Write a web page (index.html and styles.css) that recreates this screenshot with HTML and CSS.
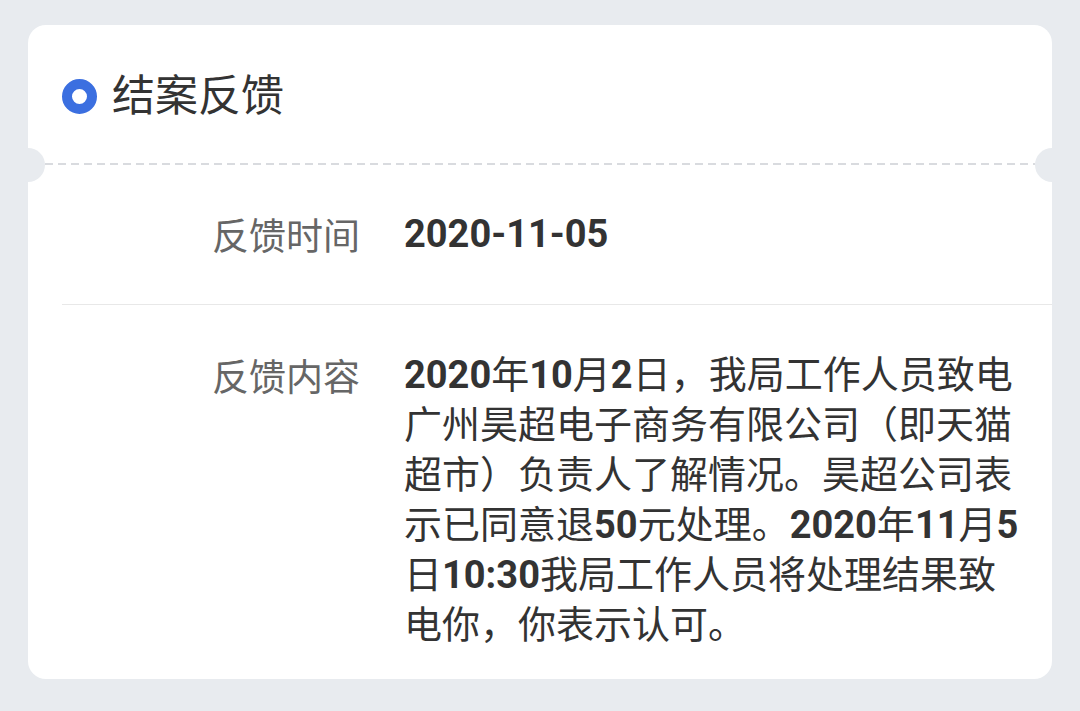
FILE: index.html
```html
<!DOCTYPE html>
<html lang="zh-CN">
<head>
<meta charset="utf-8">
<title>结案反馈</title>
<link rel="stylesheet" href="styles.css">
</head>
<body>
  <div class="card">
    <div class="card-head">
      <span class="ring"></span>
      <span class="title">结案反馈</span>
    </div>
    <div class="divider-dashed"></div>
    <span class="notch notch-left"></span>
    <span class="notch notch-right"></span>
    <div class="row row-first">
      <div class="label">反馈时间</div>
      <div class="value"><span class="num">2020-11-05</span></div>
    </div>
    <div class="row row-last">
      <div class="label">反馈内容</div>
      <div class="value text"><span class="num">2020</span>年<span class="num">10</span>月<span class="num">2</span>日，我局工作人员致电广州昊超电子商务有限公司（即天猫超市）负责人了解情况。昊超公司表示已同意退<span class="num">50</span>元处理。<span class="num">2020</span>年<span class="num">11</span>月<span class="num">5</span>日<span class="num">10:30</span>我局工作人员将处理结果致电你，你表示认可。</div>
    </div>
  </div>
</body>
</html>
```

FILE: styles.css
```css
html, body {
  margin: 0;
  padding: 0;
}
body {
  background: #e8ebef;
  font-family: Roboto, "Noto Sans CJK SC", sans-serif;
  width: 1080px;
  height: 711px;
  overflow: hidden;
  padding-top: 25px;
  box-sizing: border-box;
}
.card {
  position: relative;
  margin: 0 28px;
  background: #ffffff;
  border-radius: 18px;
  padding-bottom: 29px;
}
.card-head {
  height: 138px;
  box-sizing: border-box;
  padding: 4px 0 0 34px;
  display: flex;
  align-items: center;
  gap: 15px;
}
.ring {
  width: 15px;
  height: 15px;
  border: 10px solid #3b6fe0;
  border-radius: 50%;
  flex: none;
}
.title {
  font-family: "Noto Sans CJK SC", sans-serif;
  font-size: 43px;
  line-height: 50px;
  color: #333333;
  margin-top: -8px;
}
.divider-dashed {
  height: 2px;
  margin: 0 17px;
  background: repeating-linear-gradient(to right, #d9dbdf 0 8px, transparent 8px 13px);
}
.notch {
  position: absolute;
  top: 123px;
  width: 34px;
  height: 34px;
  border-radius: 50%;
  background: #e8ebef;
}
.notch-left { left: -17px; }
.notch-right { right: -17px; }
.row {
  display: flex;
  gap: 44px;
  margin-left: 34px;
  font-size: 38px;
  line-height: 50px;
}
.row-first {
  padding: 44px 0 45px;
  border-bottom: 1px solid #e8e8e8;
}
.row-last {
  padding-top: 45px;
}
.label {
  width: 298px;
  flex: none;
  text-align: right;
  color: #666666;
  font-size: 37px;
  font-family: "Noto Sans CJK SC", sans-serif;
}
.value {
  width: 625px;
  color: #333333;
  font-family: Roboto, "Noto Sans CJK SC", sans-serif;
}
.num {
  font-weight: 700;
}
```
